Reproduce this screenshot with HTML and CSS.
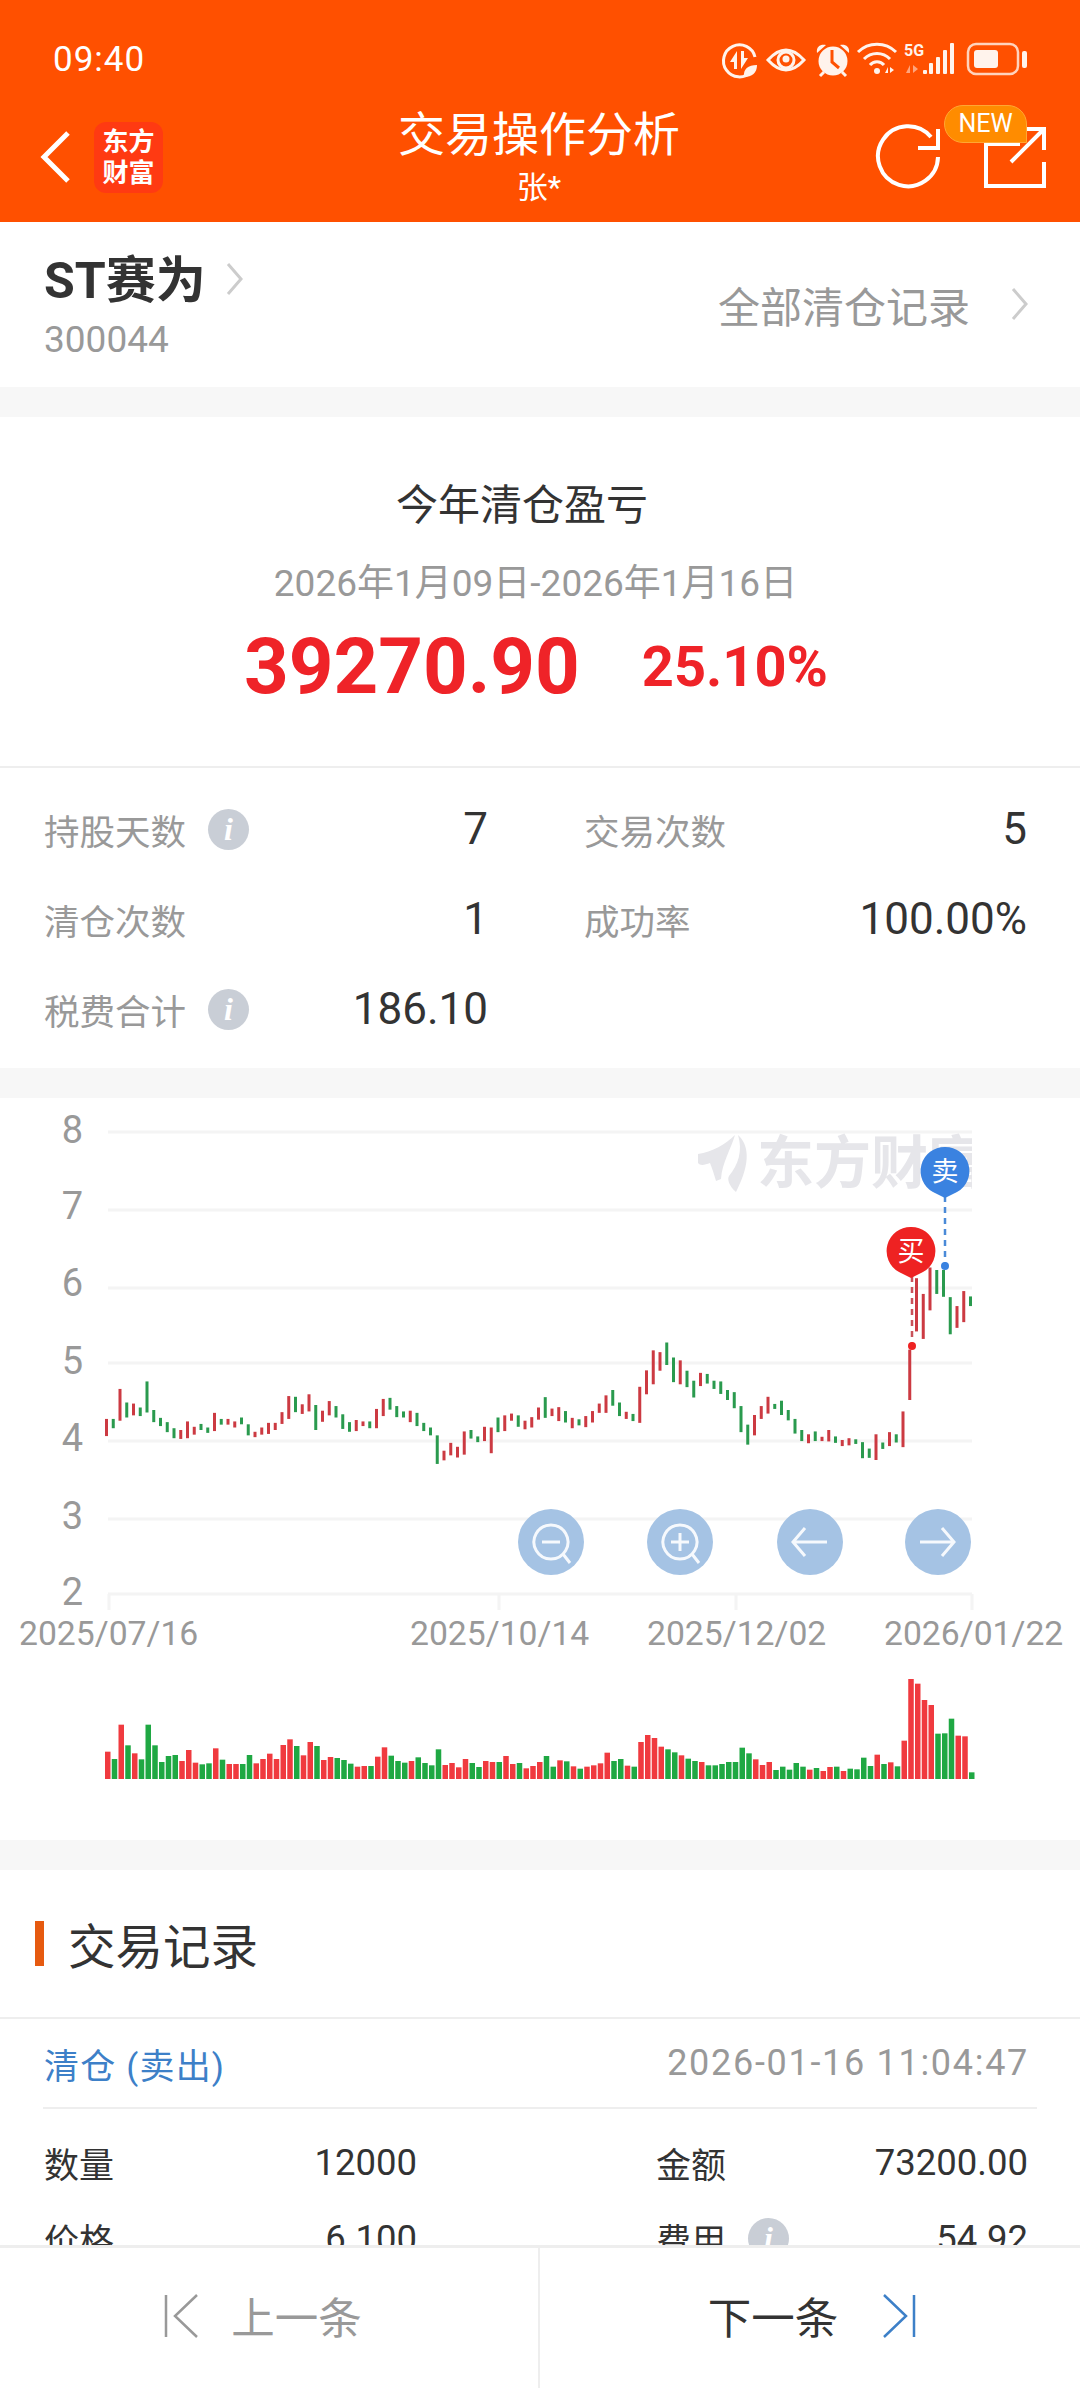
FILE: index.html
```html
<!DOCTYPE html>
<html lang="zh-CN">
<head>
    <meta charset="UTF-8">
    <title>交易操作分析</title>
    <link rel="stylesheet" href="styles.css">
</head>
<body>
<header class="header">
    <div class="status">
        <span class="clock">09:40</span>
        <svg class="status-icons" width="312" height="44" viewBox="720 36 312 44">
            <path class="line" d="M752 72A16 16 0 1 1 756 57"/>
            <path class="solid" d="M738 69V51L731 62H735V69ZM742 51V69L749 58H745V51Z"/>
            <path class="solid" d="M745 77C744 69 749 65 758 65C758 73 753 77 745 77Z"/>
            <path class="line" d="M769 60Q787 40 805 60Q787 80 769 60Z"/>
            <circle class="line" cx="787" cy="60" r="8"/>
            <circle class="solid" cx="787" cy="59" r="3.5"/>
            <circle class="solid" cx="834" cy="61" r="14.5"/>
            <path class="hand" d="M833 50V62L840 68"/>
            <path class="solid" d="M818 53C817 46 822 44 827 45ZM850 53C851 46 846 44 841 45Z"/>
            <path class="line" d="M825 72L821 76M843 72L847 76"/>
            <path class="line" d="M859 52A27 27 0 0 1 897 52M865 59A18 18 0 0 1 891 59M871 65A9 9 0 0 1 885 65"/>
            <circle class="solid" cx="878" cy="71" r="3"/>
            <path class="solid" d="M889 73V67L886 73ZM891 67V73L895 70Z"/>
            <text class="five-g" x="905" y="56">5G</text>
            <path class="faint" d="M911 73V65L907 73ZM914 65V73L919 69Z"/>
            <rect class="solid" x="924" y="70" width="4" height="4" rx="1"/>
            <rect class="solid" x="930" y="63" width="4" height="11" rx="1"/>
            <rect class="solid" x="937" y="57" width="4" height="17" rx="1"/>
            <rect class="solid" x="944" y="50" width="4" height="24" rx="1"/>
            <rect class="solid" x="951" y="43" width="4" height="31" rx="1"/>
            <rect class="battery" x="969" y="44" width="50" height="30" rx="8"/>
            <rect class="solid" x="975" y="50" width="24" height="18" rx="3"/>
            <rect class="solid" x="1023" y="51" width="5" height="17" rx="2"/>
        </svg>
    </div>
    <div class="nav">
        <div class="nav-left">
            <svg class="back" width="30" height="52" viewBox="0 0 30 52"><path d="M28 2L4 26L28 50"/></svg>
            <div class="logo">东方<br>财富</div>
        </div>
        <div class="nav-title">
            <h1>交易操作分析</h1>
            <div class="nav-sub">张*</div>
        </div>
        <div class="nav-right">
            <svg class="nav-icons" width="173" height="70" viewBox="875 120 173 70">
                <path d="M938 155A30 30 0 1 1 931 135"/>
                <path d="M938 127V146H918"/>
                <path d="M1020 142H986V184H1044V160"/>
                <path d="M1011 160L1044 127M1024 127H1044V148"/>
            </svg>
            <span class="new-tag">NEW</span>
        </div>
    </div>
</header>

<main class="content">
    <section class="stock">
        <div>
            <div class="stock-name">ST赛为
                <svg class="chevron" width="18" height="34" viewBox="0 0 18 34"><path d="M2 2L15 17L2 32"/></svg>
            </div>
            <div class="stock-code">300044</div>
        </div>
        <div class="all-link">全部清仓记录
            <svg class="chevron" width="18" height="34" viewBox="0 0 18 34"><path d="M2 2L15 17L2 32"/></svg>
        </div>
    </section>

    <section class="summary">
        <div class="summary-title">今年清仓盈亏</div>
        <div class="summary-date">2026年1月09日-2026年1月16日</div>
        <div class="summary-amount">
            <span class="amount">39270.90</span>
            <span class="percent">25.10%</span>
        </div>
    </section>

    <section class="stats">
        <div class="cell"><span class="key">持股天数<i class="info">i</i></span><span class="val">7</span></div>
        <div class="cell"><span class="key">交易次数</span><span class="val">5</span></div>
        <div class="cell"><span class="key">清仓次数</span><span class="val">1</span></div>
        <div class="cell"><span class="key">成功率</span><span class="val">100.00%</span></div>
        <div class="cell"><span class="key">税费合计<i class="info">i</i></span><span class="val">186.10</span></div>
    </section>

    <section class="chart">
        <svg id="chart" width="1080" height="742" viewBox="0 1098 1080 742">
            <path class="grid" d="M108 1132H972M108 1210H972M108 1288H972M108 1363H972M108 1441H972M108 1519H972M108 1594H972"/>
            <path class="grid" d="M109 1594V1610M499 1594V1610M736 1594V1610M972 1594V1610"/>
            <g class="axis-y">
                <text x="83" y="1143">8</text>
                <text x="83" y="1219">7</text>
                <text x="83" y="1296">6</text>
                <text x="83" y="1374">5</text>
                <text x="83" y="1451">4</text>
                <text x="83" y="1529">3</text>
                <text x="83" y="1605">2</text>
            </g>
            <g class="axis-x">
                <text x="19" y="1645">2025/07/16</text>
                <text x="410" y="1645">2025/10/14</text>
                <text x="647" y="1645">2025/12/02</text>
                <text x="884" y="1645">2026/01/22</text>
            </g>
            <clipPath id="mark-clip"><rect x="690" y="1130" width="282" height="70"/></clipPath>
            <g clip-path="url(#mark-clip)">
                <path class="mark" d="M698 1154C712 1152 726 1144 735 1135C731 1149 722 1163 721 1179L716 1181C714 1174 712 1168 710 1163C705 1165 700 1166 698 1163Z"/>
                <path class="mark" d="M738 1135C748 1144 752 1161 736 1192C729 1186 727 1179 729 1176C738 1165 743 1151 738 1135Z"/>
                <text class="mark" x="757" y="1183">东方财富</text>
            </g>
            <g id="candles"></g>
            <g id="volumes"></g>
            <path class="pin-line buy" d="M912 1276V1346"/>
            <path class="pin-line sell" d="M945 1196V1266"/>
            <circle class="pin buy" cx="912" cy="1346" r="4"/>
            <circle class="pin sell" cx="945" cy="1266" r="4"/>
            <path class="pin buy" d="M911 1227A24 24 0 0 1 923 1272L911 1278L899 1272A24 24 0 0 1 911 1227Z"/>
            <path class="pin sell" d="M945 1147A24 24 0 0 1 957 1192L945 1198L933 1192A24 24 0 0 1 945 1147Z"/>
            <text class="pin-text" x="911" y="1261">买</text>
            <text class="pin-text" x="945" y="1181">卖</text>
            <g class="tools">
                <circle cx="551" cy="1542" r="33"/>
                <circle cx="680" cy="1542" r="33"/>
                <circle cx="810" cy="1542" r="33"/>
                <circle cx="938" cy="1542" r="33"/>
                <path d="M551 1525A17 17 0 1 1 550.9 1525ZM563 1554L570 1563M542 1542H560"/>
                <path d="M680 1525A17 17 0 1 1 679.9 1525ZM692 1554L699 1563M671 1542H689M680 1533V1551"/>
                <path d="M827 1542H793M805 1528L793 1542L805 1556"/>
                <path d="M920 1542H954M942 1528L954 1542L942 1556"/>
            </g>
        </svg>
    </section>

    <section class="records">
        <h2 class="records-title">交易记录</h2>
        <div class="record-head">
            <span class="record-type">清仓 (卖出)</span>
            <span class="record-time">2026-01-16 11:04:47</span>
        </div>
        <div class="record-body">
            <div class="cell"><span class="key">数量</span><span class="val">12000</span></div>
            <div class="cell"><span class="key">金额</span><span class="val">73200.00</span></div>
            <div class="cell"><span class="key">价格</span><span class="val">6.100</span></div>
            <div class="cell"><span class="key">费用<i class="info">i</i></span><span class="val">54.92</span></div>
        </div>
    </section>
</main>

<footer class="footer">
    <div class="pager prev">
        <svg width="34" height="44" viewBox="0 0 34 44"><path d="M2 1V43M33 1L11 22L33 43"/></svg>
        <span>上一条</span>
    </div>
    <div class="pager next">
        <span>下一条</span>
        <svg width="34" height="44" viewBox="0 0 34 44"><path d="M32 1V43M2 1L24 22L2 43"/></svg>
    </div>
</footer>
<script src="chart.js"></script>
</body>
</html>
```

FILE: styles.css
```css
* {
    box-sizing: border-box;
}
body {
    width: 1080px;
    height: 2388px;
    margin: 0;
    display: flex;
    flex-direction: column;
    overflow: hidden;
    background: #fff;
    color: #333;
    font-family: Roboto, "Noto Sans CJK SC", sans-serif;
}

/* header */
.header {
    height: 222px;
    flex: none;
    background: #ff5000;
    color: #fff;
}
.status {
    height: 103px;
    padding: 36px 49px 0 53px;
    display: flex;
    justify-content: space-between;
    align-items: flex-start;
}
.clock {
    font-size: 35px;
    line-height: 48px;
    letter-spacing: 1px;
}
.status-icons .solid {
    fill: #fff3ec;
}
.status-icons .line {
    fill: none;
    stroke: #fff3ec;
    stroke-width: 3;
}
.status-icons .hand {
    fill: none;
    stroke: #ff5000;
    stroke-width: 3;
}
.status-icons .faint {
    fill: #ffa57d;
}
.status-icons .battery {
    fill: none;
    stroke: #ffd3bd;
    stroke-width: 2.5;
}
.five-g {
    font-size: 16px;
    font-weight: 700;
    fill: #fff3ec;
}
.nav {
    height: 108px;
    padding: 0 32px 0 40px;
    display: grid;
    grid-template-columns: 1fr auto 1fr;
    align-items: center;
}
.nav-left {
    display: flex;
    align-items: center;
    gap: 24px;
}
.back path {
    fill: none;
    stroke: #fff;
    stroke-width: 5;
}
.logo {
    width: 69px;
    height: 71px;
    border-radius: 12px;
    background: #ff3a12;
    text-align: center;
    font-size: 26px;
    font-weight: 700;
    line-height: 31px;
    padding-top: 5px;
}
.nav-title {
    text-align: center;
    padding-right: 10px;
}
.nav-title h1 {
    margin: 0;
    font-size: 47px;
    font-weight: 400;
    line-height: 60px;
}
.nav-sub {
    margin-top: 2px;
    font-size: 31px;
    line-height: 42px;
}
.nav-right {
    position: relative;
    display: flex;
    justify-content: flex-end;
}
.nav-icons path {
    fill: none;
    stroke: #fff;
    stroke-width: 4;
}
.new-tag {
    position: absolute;
    right: 21px;
    top: -17px;
    width: 83px;
    height: 38px;
    border-radius: 19px 19px 0 19px;
    background: #ff8c00;
    border: 1px solid #ffa733;
    text-align: center;
    font-size: 25px;
    line-height: 36px;
}

/* page sections */
.content {
    flex: 1;
    min-height: 0;
    overflow: hidden;
    background: #f7f7f7;
}
section {
    background: #fff;
    margin-bottom: 30px;
}
.chevron path {
    fill: none;
    stroke: #ccc;
    stroke-width: 3;
}
.stock {
    height: 165px;
    padding: 30px 51px 0 44px;
    display: flex;
    justify-content: space-between;
}
.stock-name {
    display: flex;
    align-items: center;
    gap: 20px;
    font-size: 50px;
    font-weight: 700;
    line-height: 58px;
}
.stock-name .chevron {
    margin-top: -4px;
}
.stock-code {
    margin-top: 9px;
    color: #999;
    font-size: 37px;
    line-height: 42px;
}
.all-link {
    display: flex;
    align-items: center;
    gap: 41px;
    height: 44px;
    margin-top: 30px;
    color: #999;
    font-size: 42px;
}

.summary {
    height: 351px;
    padding-top: 64px;
    margin-bottom: 0;
    border-bottom: 2px solid #eee;
    text-align: center;
}
.summary-title {
    padding-right: 36px;
    font-size: 42px;
    line-height: 50px;
}
.summary-date {
    margin-top: 30px;
    padding-right: 9px;
    color: #999;
    font-size: 37px;
    line-height: 46px;
}
.summary-amount {
    margin-top: 15px;
    padding-right: 8px;
    display: flex;
    justify-content: center;
    align-items: center;
    gap: 62px;
    color: #ef2328;
    font-weight: 700;
    line-height: 90px;
}
.amount {
    font-size: 78px;
}
.percent {
    font-size: 56px;
}

.stats {
    height: 300px;
    padding: 16px 53px 14px 44px;
    display: grid;
    grid-template-columns: 444px 443px;
    grid-auto-rows: 90px;
    column-gap: 96px;
}
.cell {
    display: flex;
    justify-content: space-between;
    align-items: center;
}
.key {
    display: flex;
    align-items: center;
    gap: 22px;
    color: #999;
    font-size: 35.5px;
}
.val {
    font-size: 44px;
}
.info {
    width: 41px;
    height: 41px;
    border-radius: 50%;
    background: #c9ced6;
    color: #fff;
    text-align: center;
    font-family: "Liberation Serif", serif;
    font-size: 32px;
    font-weight: 700;
    line-height: 41px;
}

/* chart svg, coordinates are page pixels */
.chart {
    height: 742px;
}
.chart svg {
    display: block;
}
.grid {
    fill: none;
    stroke: #f4f4f4;
    stroke-width: 3;
}
.axis-y text {
    fill: #999;
    font-size: 38px;
    text-anchor: end;
}
.axis-x text {
    fill: #999;
    font-size: 33.7px;
}
.mark {
    fill: #e6e6ea;
}
text.mark {
    font-size: 57px;
    font-weight: 700;
}
.up {
    fill: #cc3a42;
}
.down {
    fill: #2a9a4e;
}
.vol-up {
    fill: #f03a3f;
}
.vol-down {
    fill: #1fa843;
}
.pin.buy {
    fill: #ee2222;
}
.pin.sell {
    fill: #3a82e0;
}
.pin-line {
    fill: none;
    stroke-width: 2.5;
    stroke-dasharray: 6 5;
}
.pin-line.buy {
    stroke: #c8525a;
}
.pin-line.sell {
    stroke: #4a8ad8;
}
.pin-text {
    fill: #fff;
    font-size: 27px;
    text-anchor: middle;
}
.tools circle {
    fill: #a5c3e4;
}
.tools path {
    fill: none;
    stroke: #fff;
    stroke-width: 3;
    opacity: .9;
}

/* trade records */
.records {
    margin-bottom: 0;
}
.records-title {
    height: 149px;
    margin: 0;
    padding-left: 35px;
    display: flex;
    align-items: center;
    border-bottom: 2px solid #eee;
    font-size: 47.5px;
    font-weight: 400;
}
.records-title::before {
    content: "";
    width: 9px;
    height: 45px;
    margin-right: 24px;
    background: #e65a10;
}
.record-head {
    height: 90px;
    margin: 0 43px;
    padding: 0 8px 0 1px;
    display: flex;
    justify-content: space-between;
    align-items: center;
    border-bottom: 2px solid #eee;
}
.record-type {
    color: #3d80c8;
    font-size: 35px;
    letter-spacing: 1.2px;
}
.record-time {
    color: #999;
    font-size: 36px;
    letter-spacing: 1.7px;
}
.record-body {
    padding: 15px 52px 0 44px;
    display: grid;
    grid-template-columns: 373px 372px;
    grid-auto-rows: 76px;
    column-gap: 239px;
}
.record-body .key {
    color: #333;
    font-size: 35px;
}
.record-body .val {
    font-size: 36.5px;
}

/* bottom pager */
.footer {
    height: 143px;
    flex: none;
    display: flex;
    background: #fff;
    border-top: 3px solid #eee;
}
.pager {
    width: 50%;
    display: flex;
    justify-content: center;
    align-items: center;
    padding-bottom: 5px;
    font-size: 43.5px;
}
.pager svg path {
    fill: none;
    stroke-width: 2.5;
}
.prev {
    gap: 33px;
    color: #999;
    border-right: 2px solid #eee;
    padding-right: 12px;
}
.prev svg path {
    stroke: #999;
}
.next {
    gap: 44px;
    padding-left: 4px;
}
.next svg path {
    stroke: #3d80c8;
}
```

FILE: chart.js
```js
;(function () {
  const NS = 'http://www.w3.org/2000/svg'

  // top, bottom of each candle, r = up, g = down. measured on a 2.8x crop starting at y 1090
  const candles = [
    [921, 969, 'r'], [921, 947, 'g'], [837, 926, 'r'], [875, 917, 'g'], [878, 911, 'r'], [889, 913, 'g'],
    [816, 903, 'g'], [896, 930, 'g'], [918, 941, 'g'], [930, 958, 'g'], [947, 975, 'g'], [952, 977, 'r'],
    [928, 975, 'r'], [943, 965, 'r'], [935, 952, 'g'], [945, 960, 'g'], [904, 955, 'r'], [921, 937, 'g'],
    [921, 937, 'r'], [928, 945, 'r'], [917, 936, 'g'], [936, 967, 'g'], [957, 972, 'r'], [945, 965, 'r'],
    [932, 963, 'r'], [932, 952, 'r'], [902, 935, 'r'], [857, 921, 'r'], [859, 902, 'g'], [880, 907, 'r'],
    [852, 900, 'r'], [882, 952, 'g'], [898, 929, 'r'], [871, 911, 'r'], [885, 917, 'g'], [908, 949, 'g'],
    [930, 957, 'g'], [924, 955, 'r'], [928, 941, 'r'], [928, 947, 'g'], [893, 947, 'r'], [865, 913, 'r'],
    [862, 895, 'g'], [885, 916, 'g'], [900, 917, 'g'], [898, 930, 'r'], [904, 941, 'g'], [932, 955, 'g'],
    [945, 967, 'g'], [967, 1047, 'g'], [1010, 1037, 'r'], [988, 1023, 'r'], [999, 1029, 'r'], [956, 1021, 'r'],
    [952, 976, 'g'], [970, 986, 'g'], [943, 983, 'r'], [945, 1017, 'r'], [917, 958, 'g'], [911, 955, 'r'],
    [906, 926, 'r'], [911, 943, 'g'], [926, 950, 'r'], [916, 945, 'r'], [889, 923, 'r'],
    [860, 918, 'g'], [892, 913, 'r'], [888, 927, 'r'], [899, 931, 'g'], [918, 947, 'r'], [922, 939, 'g'],
    [913, 944, 'r'], [899, 931, 'r'], [878, 904, 'r'], [855, 904, 'r'], [840, 884, 'g'], [875, 913, 'g'],
    [901, 921, 'r'], [907, 927, 'g'], [831, 932, 'r'], [785, 852, 'r'], [729, 824, 'r'], [734, 786, 'r'],
    [707, 770, 'g'], [749, 818, 'g'], [757, 824, 'r'], [786, 832, 'g'], [814, 861, 'g'], [792, 829, 'r'],
    [795, 822, 'g'], [814, 837, 'g'], [816, 851, 'g'], [840, 868, 'g'], [846, 891, 'g'], [885, 958, 'g'],
    [937, 993, 'g'], [910, 967, 'r'], [885, 921, 'r'], [859, 906, 'r'], [879, 893, 'g'], [870, 910, 'g'],
    [896, 925, 'g'], [921, 962, 'g'], [952, 983, 'g'], [964, 989, 'r'], [956, 983, 'g'], [971, 983, 'r'],
    [952, 984, 'r'], [970, 988, 'g'], [980, 997, 'r'], [975, 995, 'r'], [978, 991, 'g'], [986, 1031, 'g'],
    [1004, 1030, 'g'], [964, 1036, 'r'], [987, 1005, 'g'], [958, 997, 'r'], [964, 987, 'g'], [900, 1000, 'r'],
    [727, 868, 'r'], [527, 676, 'r'], [571, 697, 'r'], [497, 617, 'r'], [504, 571, 'g'], [504, 579, 'g'],
    [580, 684, 'g'], [605, 666, 'r'], [563, 650, 'r'], [578, 605, 'g']
  ]

  // bar tops on a 3x crop starting at y 1640
  const volumes = [
    335, 'r', 357, 'g', 254, 'r', 316, 'g', 340, 'r', 358, 'g', 254, 'g', 316, 'g', 366, 'g', 348, 'g', 345, 'g',
    363, 'r', 330, 'r', 368, 'r', 373, 'g', 370, 'g', 325, 'r', 359, 'g', 372, 'r', 372, 'r', 372, 'g', 345, 'g',
    370, 'r', 357, 'r', 341, 'r', 357, 'r', 315, 'r', 298, 'r', 318, 'g', 346, 'r', 306, 'r', 318, 'g', 360, 'r',
    351, 'r', 354, 'g', 360, 'g', 371, 'g', 380, 'r', 378, 'r', 378, 'g', 350, 'r', 322, 'r', 347, 'g', 363, 'g',
    368, 'g', 363, 'r', 352, 'g', 369, 'g', 376, 'g', 328, 'g', 375, 'r', 369, 'r', 382, 'r', 357, 'r', 369, 'g',
    381, 'g', 363, 'r', 366, 'r', 366, 'g', 348, 'r', 372, 'r', 369, 'g', 385, 'r', 378, 'r', 366, 'r', 348, 'g',
    380, 'g', 361, 'r', 364, 'g', 379, 'r', 386, 'g', 380, 'r', 376, 'r', 370, 'r', 338, 'r', 363, 'g', 357, 'g',
    377, 'r', 380, 'g', 306, 'r', 285, 'r', 294, 'r', 320, 'r', 328, 'g', 337, 'g', 346, 'r', 356, 'g', 363, 'g',
    366, 'r', 376, 'g', 376, 'g', 372, 'g', 366, 'g', 366, 'g', 323, 'g', 340, 'g', 358, 'r', 375, 'r', 366, 'r',
    390, 'g', 380, 'g', 389, 'g', 369, 'g', 380, 'g', 389, 'r', 384, 'g', 393, 'r', 381, 'r', 380, 'g', 393, 'r',
    386, 'g', 388, 'g', 353, 'g', 378, 'g', 344, 'r', 372, 'g', 367, 'r', 379, 'g', 302, 'r', 117, 'r', 131, 'r',
    180, 'r', 195, 'r', 281, 'g', 280, 'g', 236, 'g', 287, 'r', 289, 'r', 397, 'g'
  ]

  function addRect (parent, x, y, w, h, cls) {
    let r = document.createElementNS(NS, 'rect')
    r.setAttribute('x', x.toFixed(2))
    r.setAttribute('y', y.toFixed(2))
    r.setAttribute('width', w)
    r.setAttribute('height', h.toFixed(2))
    r.setAttribute('class', cls)
    parent.appendChild(r)
  }

  let candleGroup = document.getElementById('candles')
  candles.forEach(function (c, i) {
    let top = 1090 + c[0] / 2.8
    let bottom = 1090 + c[1] / 2.8
    addRect(candleGroup, 105 + i * 6.75, top, 3, bottom - top, c[2] === 'r' ? 'up' : 'down')
  })

  let volumeGroup = document.getElementById('volumes')
  for (let i = 0; i < volumes.length; i += 2) {
    let top = 1640 + volumes[i] / 3
    addRect(volumeGroup, 105 + (i / 2) * 6.75, top, 5.5, 1779 - top, volumes[i + 1] === 'r' ? 'vol-up' : 'vol-down')
  }
})()
```
